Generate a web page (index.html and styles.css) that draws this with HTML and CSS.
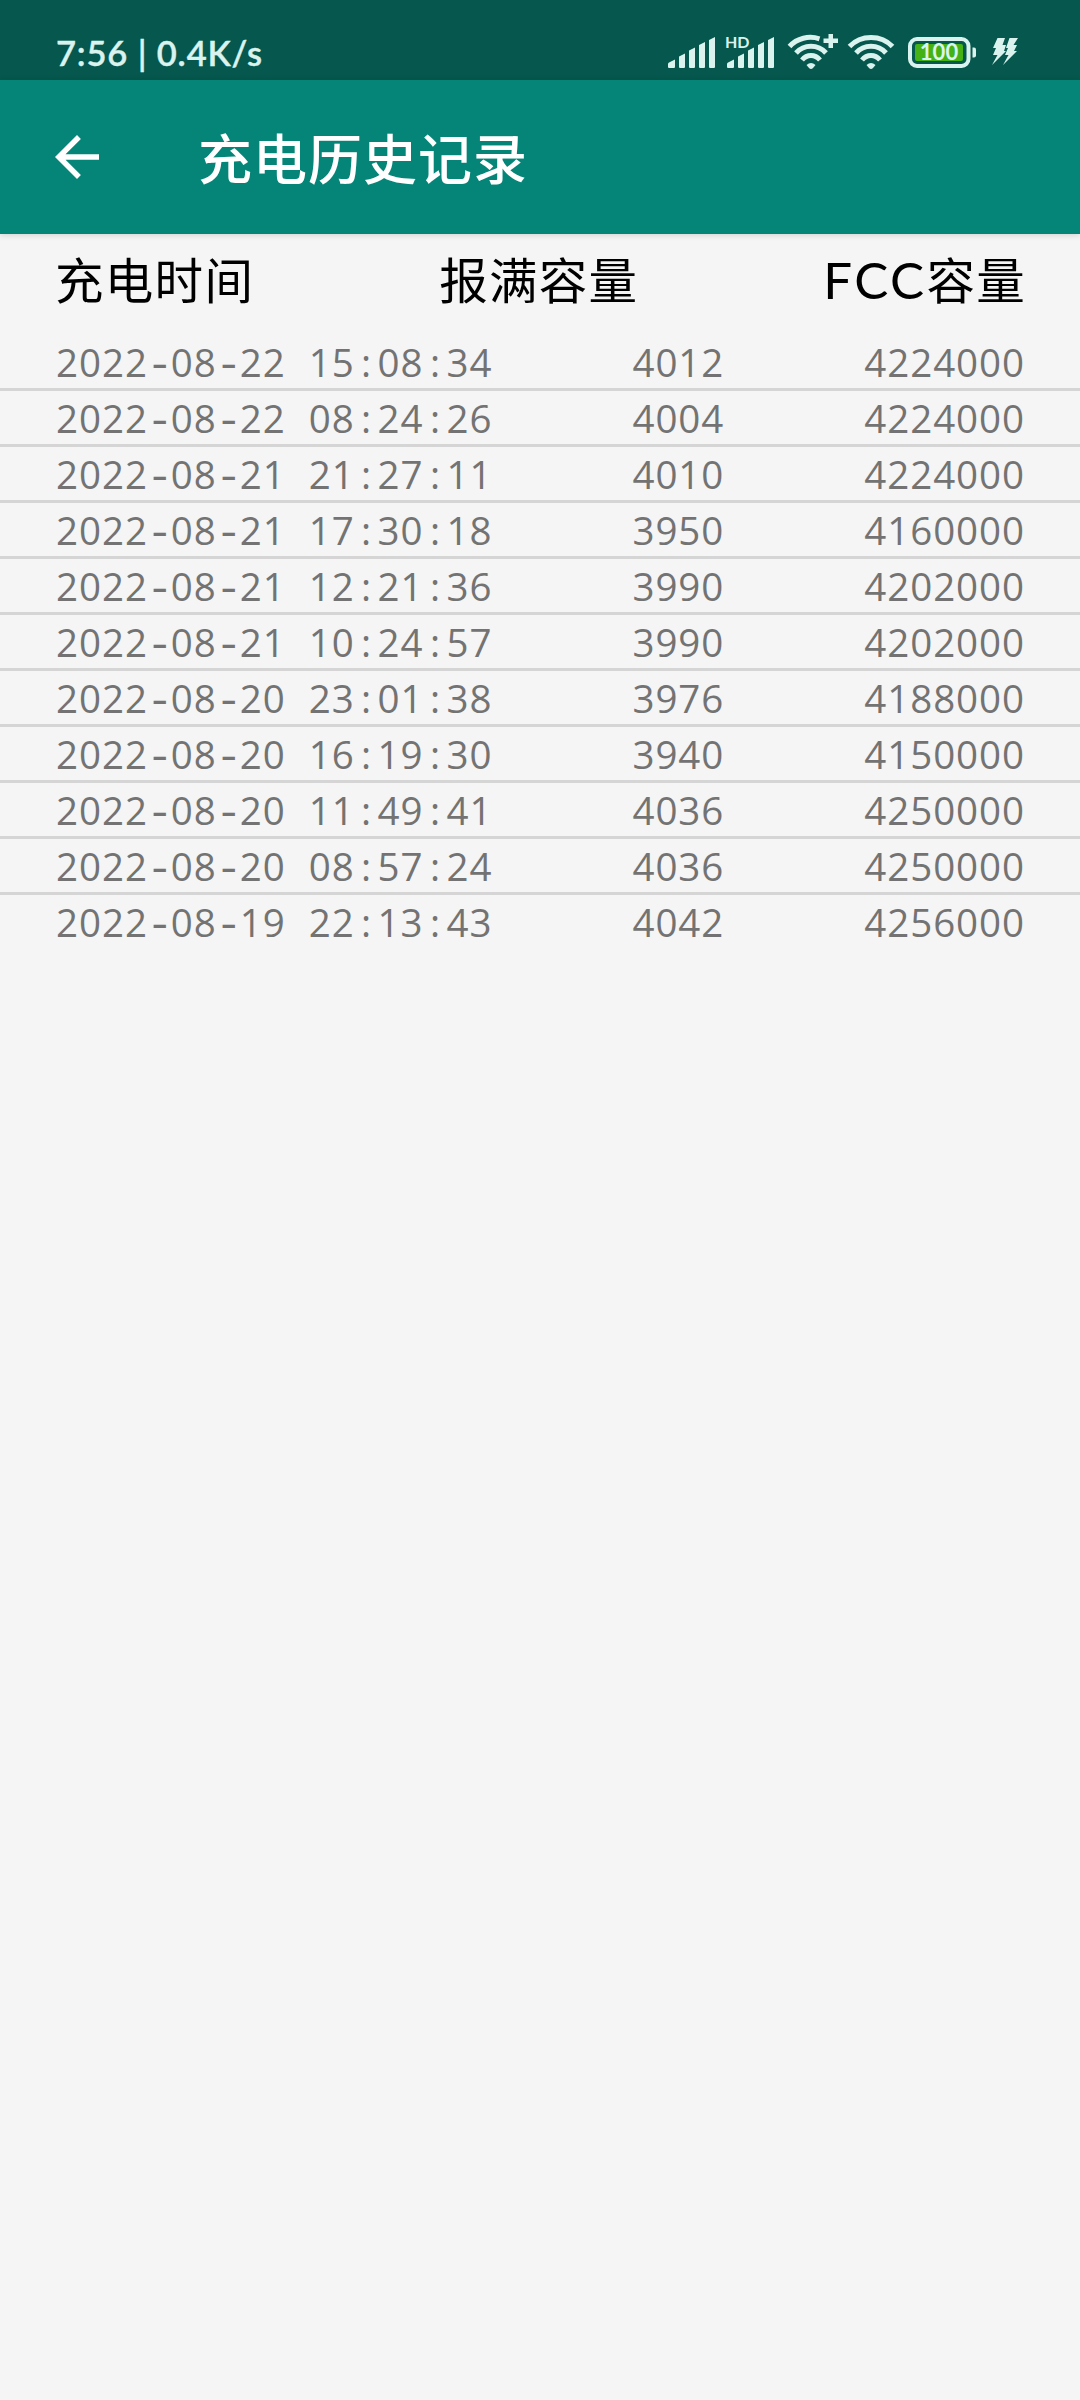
FILE: index.html
```html
<!DOCTYPE html>
<html lang="zh-CN">
<head>
    <meta charset="UTF-8">
    <title>充电历史记录</title>
    <meta name="viewport" content="width=device-width, initial-scale=1.0">
    <link rel="stylesheet" href="styles.css">
</head>
<body>

    <div class="status-bar">
        <span class="clock">7:56 | 0.4K/s</span>
        <div class="status-icons">
            <svg class="signal" width="48" height="32" viewBox="0 0 48 32">
                <path d="M0 27q0-1 1-1.500l6-3V30q0 1-1 1H1q-1 0-1-1zM11 19.500l6-3V30q0 1-1 1h-4q-1 0-1-1zM21 13.500l6-3V30q0 1-1 1h-4q-1 0-1-1zM31 8l6-3v25q0 1-1 1h-4q-1 0-1-1zM41 3l6-3v30q0 1-1 1h-4q-1 0-1-1z"/>
            </svg>
            <svg class="signal-hd" width="51" height="34" viewBox="0 0 51 34">
                <text x="0" y="13" class="hd">HD</text>
                <path d="M2 29q0-1 1-1.500l6-3V32q0 1-1 1H3q-1 0-1-1zM13 21.500l6-3V32q0 1-1 1h-4q-1 0-1-1zM23 15.500l6-3V32q0 1-1 1h-4q-1 0-1-1zM33 10l6-3v25q0 1-1 1h-4q-1 0-1-1zM43 5l6-3v30q0 1-1 1h-4q-1 0-1-1z"/>
            </svg>
            <svg class="wifi-plus" width="50" height="36" viewBox="0 0 50 36">
                <path class="wave" d="M1.500 12.500C9 4 21 1.500 31.500 4.800M8 19c8-9 22-9 30 0M14 26c5-6 13-6 18 0"/>
                <path d="M18.500 31q4.500-4 9 0l-2.500 3q-2 2-4 0z"/>
                <path d="M40.500 0h4.500v4.500h5v4.500h-5v5h-4.500V9h-5V4.500h5z"/>
            </svg>
            <svg class="wifi" width="46" height="34" viewBox="0 0 46 34">
                <path class="wave" d="M1.500 10.500C13-1.500 33-1.500 44.500 10.500M8 17c8-9 22-9 30 0M14 24c5-6 13-6 18 0"/>
                <path d="M18.500 29q4.500-4 9 0l-2.500 3q-2 2-4 0z"/>
            </svg>
            <svg class="battery" width="69" height="31" viewBox="0 0 69 31">
                <rect class="shell" x="2" y="2" width="58.500" height="27" rx="7"/>
                <rect class="level" x="7" y="7" width="48" height="17" rx="2"/>
                <path d="M64.500 10.500h1.500q2 0 2 2v6q0 2-2 2h-1.500z"/>
                <text x="31" y="23" class="percent">100</text>
            </svg>
            <svg class="bolt" width="28" height="29" viewBox="0 0 28 29">
                <path d="M6.500 1H14l-2.500 7H15l-2 6h2L1 28l5.500-10H2l3-7H2z"/>
                <path d="M18.500 1H27l-4.500 7H26l-3 6h3L12 28l5.500-10H14l3-7h-2z"/>
            </svg>
        </div>
    </div>

    <header class="app-bar">
        <svg class="back" width="66" height="66" viewBox="0 0 24 24">
            <path d="M20 11H7.830l5.590-5.590L12 4l-8 8 8 8 1.410-1.410L7.830 13H20v-2z"/>
        </svg>
        <h1>充电历史记录</h1>
    </header>

    <div class="table-head">
        <span>充电时间</span>
        <span>报满容量</span>
        <span><span class="latin">FCC</span>容量</span>
    </div>

    <ul class="records">
        <li><span>2022<i>-</i>08<i>-</i>22 15<b>:</b>08<b>:</b>34</span><span>4012</span><span>4224000</span></li>
        <li><span>2022<i>-</i>08<i>-</i>22 08<b>:</b>24<b>:</b>26</span><span>4004</span><span>4224000</span></li>
        <li><span>2022<i>-</i>08<i>-</i>21 21<b>:</b>27<b>:</b>11</span><span>4010</span><span>4224000</span></li>
        <li><span>2022<i>-</i>08<i>-</i>21 17<b>:</b>30<b>:</b>18</span><span>3950</span><span>4160000</span></li>
        <li><span>2022<i>-</i>08<i>-</i>21 12<b>:</b>21<b>:</b>36</span><span>3990</span><span>4202000</span></li>
        <li><span>2022<i>-</i>08<i>-</i>21 10<b>:</b>24<b>:</b>57</span><span>3990</span><span>4202000</span></li>
        <li><span>2022<i>-</i>08<i>-</i>20 23<b>:</b>01<b>:</b>38</span><span>3976</span><span>4188000</span></li>
        <li><span>2022<i>-</i>08<i>-</i>20 16<b>:</b>19<b>:</b>30</span><span>3940</span><span>4150000</span></li>
        <li><span>2022<i>-</i>08<i>-</i>20 11<b>:</b>49<b>:</b>41</span><span>4036</span><span>4250000</span></li>
        <li><span>2022<i>-</i>08<i>-</i>20 08<b>:</b>57<b>:</b>24</span><span>4036</span><span>4250000</span></li>
        <li><span>2022<i>-</i>08<i>-</i>19 22<b>:</b>13<b>:</b>43</span><span>4042</span><span>4256000</span></li>
    </ul>

</body>
</html>
```
FILE: styles.css
```css
* {
    box-sizing: border-box;
}
body {
    margin: 0;
    min-height: 2400px;
    background: #f5f5f5;
    font-family: "Noto Sans CJK SC", sans-serif;
}
.status-bar {
    display: flex;
    justify-content: space-between;
    height: 80px;
    padding: 0 61px 0 56px;
    background: #06574d;
    color: #daf3ef;
}
.clock {
    font-family: Lato, sans-serif;
    font-size: 34.5px;
    font-weight: 600;
    line-height: 40px;
    padding-top: 33px;
    letter-spacing: 0.85px;
    white-space: pre;
    -webkit-text-stroke: 0.4px #daf3ef;
}
.status-icons {
    display: flex;
    align-items: flex-start;
    fill: #daf3ef;
}
.status-icons svg {
    overflow: visible;
}
.signal {
    margin: 37px 9px 0 0;
}
.signal-hd {
    margin: 35px 12px 0 0;
}
.hd {
    font: bold 16px Lato, sans-serif;
}
.wifi-plus {
    margin: 34px 10px 0 0;
}
.wifi {
    margin: 36px 14px 0 0;
}
.wave {
    fill: none;
    stroke: #daf3ef;
    stroke-width: 5;
}
.battery {
    margin: 37px 14px 0 0;
}
.shell {
    fill: none;
    stroke: #daf3ef;
    stroke-width: 4;
}
.level {
    fill: #44b215;
}
.percent {
    font: bold 22px Lato, sans-serif;
    text-anchor: middle;
}
.bolt {
    margin-top: 37px;
}
.app-bar {
    display: flex;
    align-items: center;
    height: 154px;
    padding-left: 44px;
    background: #048577;
    color: #fff;
    box-shadow: 0 1px 6px rgba(0,0,0,0.15);
}
.back {
    fill: #fff;
}
h1 {
    margin: 0 0 0 88px;
    font-size: 54px;
    font-weight: 500;
    line-height: 80px;
    letter-spacing: 1px;
}
.table-head {
    display: flex;
    justify-content: space-between;
    height: 101px;
    padding: 8px 54px 0 55px;
    font-size: 48.5px;
    line-height: 72px;
    letter-spacing: 1.3px;
    color: #000;
}
.latin {
    font-family: Lato, sans-serif;
    font-size: 51px;
    letter-spacing: 2.4px;
}
.records {
    margin: 0;
    padding: 0;
    list-style: none;
    font-family: "Open Sans", sans-serif;
    font-size: 38.5px;
    line-height: 55px;
    letter-spacing: 0.95px;
    word-spacing: 12px;
    color: #737373;
}
.records li {
    display: flex;
    justify-content: space-between;
    height: 56px;
    padding: 0 55px 0 56px;
    border-bottom: 3px solid #d5d5d5;
}
.records li:last-child {
    border-bottom: none;
}
/* separators take the same width as a digit */
.records i, .records b {
    display: inline-block;
    width: 23px;
    font-style: normal;
    font-weight: normal;
    text-align: center;
    letter-spacing: 0;
}
.records i {
    font-family: "DejaVu Sans Mono", monospace;
    line-height: 1;
    transform: scaleX(1.25);
}
```
